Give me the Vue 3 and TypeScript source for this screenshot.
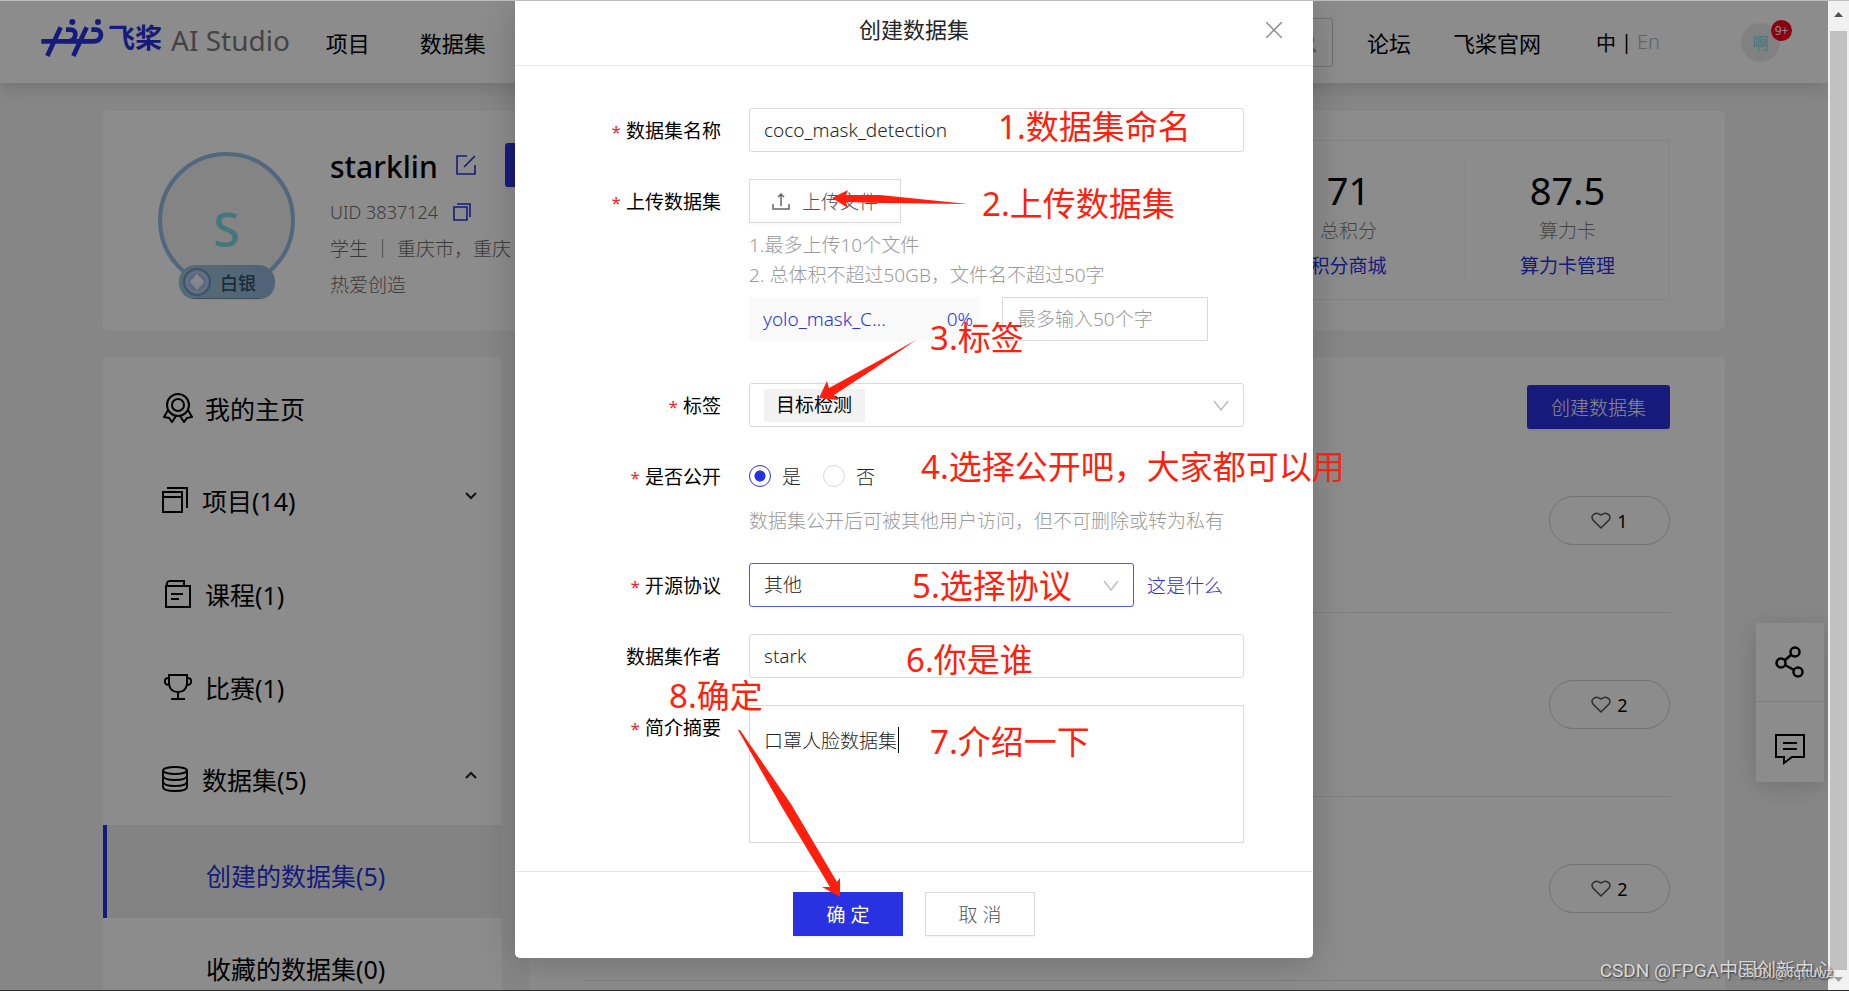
<script setup lang="ts">
import { ref } from 'vue'

interface MenuItem {
  label: string
  icon: string
  chevron?: 'up' | 'down'
}
interface Note {
  text: string
  x: number
  y: number
}

const menu: MenuItem[] = [
  { label: '我的主页', icon: 'medal' },
  { label: '项目(14)', icon: 'stack', chevron: 'down' },
  { label: '课程(1)', icon: 'course' },
  { label: '比赛(1)', icon: 'trophy' },
  { label: '数据集(5)', icon: 'database', chevron: 'up' },
]

const likes: number[] = [1, 2, 2]

const notes: Note[] = [
  { text: '1.数据集命名', x: 483, y: 102 },
  { text: '2.上传数据集', x: 467, y: 179 },
  { text: '3.标签', x: 415, y: 313 },
  { text: '4.选择公开吧，大家都可以用', x: 406, y: 442 },
  { text: '5.选择协议', x: 397, y: 561 },
  { text: '6.你是谁', x: 391, y: 635 },
  { text: '7.介绍一下', x: 415, y: 717 },
  { text: '8.确定', x: 154, y: 671 },
]

const name = ref('coco_mask_detection')
const fileNote = ref('')
const tag = ref('目标检测')
const isPublic = ref('yes')
const license = ref('其他')
const author = ref('stark')
const summary = ref('口罩人脸数据集')
</script>

<template>
  <div class="window">
    <div class="viewport">
      <header class="topbar">
        <a class="brand" href="#">
          <svg class="mark" viewBox="120 54 192 117" fill="none" stroke="#2932e1" stroke-width="14">
            <path d="M182 82 L142 168 M260 82 L220 168" />
            <path d="M124 124 H204 Q222 124 226 106 Q228 89 210 89 H198" />
            <path d="M204 124 H280 Q300 124 303 106 Q304 89 286 89 H274" />
            <circle cx="217" cy="66" r="9" fill="#2932e1" stroke="none" />
            <circle cx="294" cy="66" r="9" fill="#2932e1" stroke="none" />
          </svg>
          <span class="brand-cn">飞桨</span>
          <span class="brand-en">AI Studio</span>
        </a>
        <nav class="nav">
          <a href="#">项目</a>
          <a href="#">数据集</a>
        </nav>
        <div class="search">
          <input type="text" aria-label="搜索" />
          <svg viewBox="0 0 22 22" fill="none" stroke="#999" stroke-width="2">
            <circle cx="9" cy="9" r="8" />
            <path d="M14 15 L20 21" />
          </svg>
        </div>
        <nav class="links">
          <a href="#">论坛</a>
          <a href="#">飞桨官网</a>
        </nav>
        <div class="lang"><a href="#">中</a><span>|</span><a href="#" class="off">En</a></div>
        <div class="user">
          <span>啊</span>
          <b class="count">9+</b>
        </div>
      </header>

      <main class="page">
        <section class="card profile">
          <div class="avatar">
            <span class="letter">S</span>
            <div class="rank">
              <svg viewBox="0 0 30 30">
                <circle cx="15" cy="15" r="13" fill="#a3c2ea" stroke="#7195bf" stroke-width="2" />
                <circle cx="15" cy="15" r="10" fill="none" stroke="#c8def8" />
                <path d="M15 7 L22 15 L15 23 L8 15 Z" fill="#e9f4ff" />
                <path d="M15 7 L22 15 H8 Z" fill="#f8fcff" />
              </svg>
              <span>白银</span>
            </div>
          </div>
          <div class="person">
            <div class="name-row">
              <h1>starklin</h1>
              <svg class="edit" viewBox="0 0 20 20" fill="none" stroke="#2932e1" stroke-width="1.6">
                <path d="M11 1 H1 V19 H19 V10 M8 12 L19 1" />
              </svg>
              <button class="primary follow" type="button">编辑资料</button>
            </div>
            <p class="uid">
              UID 3837124
              <svg class="copy" viewBox="0 0 18 18" fill="none" stroke="#2932e1" stroke-width="1.6">
                <path d="M1 4 H14 V17 H1 Z M4 1 H17 V14" />
              </svg>
            </p>
            <p>学生 ｜ 重庆市，重庆</p>
            <p>热爱创造</p>
          </div>
          <div class="stats">
            <div class="stat wide">
              <strong>71</strong>
              <span>总积分</span>
              <a href="#">积分商城</a>
            </div>
            <div class="stat">
              <strong>87.5</strong>
              <span>算力卡</span>
              <a href="#">算力卡管理</a>
            </div>
          </div>
        </section>

        <div class="columns">
          <aside class="card sidebar">
            <a v-for="item in menu" :key="item.label" href="#" class="entry" :class="{ group: item.chevron }">
              <svg v-if="item.icon === 'medal'" class="ico" viewBox="0 0 30 30">
                <circle cx="15" cy="12" r="11" />
                <circle cx="15" cy="12" r="6" />
                <path d="M5 17 L1 24 L6 25 L9 29 L13 23 M25 17 L29 24 L24 25 L21 29 L17 23" />
              </svg>
              <svg v-else-if="item.icon === 'stack'" class="ico" viewBox="0 0 26 26">
                <path d="M1 5 H20 V25 H1 Z M1 10 H20 M5 1 H25 V21" />
              </svg>
              <svg v-else-if="item.icon === 'course'" class="ico" viewBox="0 0 30 30">
                <path d="M3 6 V28 H27 V7 H4 Q3 2 7 2 H21 V7 M8 15 H20 M8 20 H16" />
              </svg>
              <svg v-else-if="item.icon === 'trophy'" class="ico" viewBox="0 0 30 30">
                <path d="M6 3 H24 V12 Q23 20 15 20 Q7 20 6 12 Z M6 6 Q1 6 2 10 Q2 13 7 13 M24 6 Q29 6 28 10 Q28 13 23 13 M15 20 V27 M8 27 H22" />
              </svg>
              <svg v-else class="ico" viewBox="0 0 26 26">
                <ellipse cx="13" cy="4.500" rx="12" ry="3.500" />
                <path d="M1 5 V21 Q1 25 13 25 Q25 25 25 21 V5 M1 10 Q2 14 13 14 Q24 14 25 10 M1 16 Q2 20 13 20 Q24 20 25 16" />
              </svg>
              <span>{{ item.label }}</span>
              <svg v-if="item.chevron" class="chev" viewBox="0 0 12 8">
                <path :d="item.chevron === 'down' ? 'M1 1 L6 6 L11 1' : 'M1 7 L6 2 L11 7'" />
              </svg>
            </a>
            <a href="#" class="sub active">创建的数据集(5)</a>
            <a href="#" class="sub">收藏的数据集(0)</a>
          </aside>

          <section class="card list">
            <div class="list-head">
              <button class="primary" type="button">创建数据集</button>
            </div>
            <div v-for="(n, i) in likes" :key="i" class="row">
              <button class="like" type="button">
                <svg viewBox="0 0 20 17" fill="none" stroke="#555" stroke-width="1.500">
                  <path d="M10 16 L2 8 Q0 5 2 3 Q5 0 8 2 L10 3 L12 2 Q15 0 18 3 Q20 5 18 8 Z" />
                </svg>
                <span>{{ n }}</span>
              </button>
            </div>
          </section>
        </div>
      </main>

      <div class="float">
        <button type="button" aria-label="分享">
          <svg viewBox="0 0 30 32" fill="none" stroke="#000" stroke-width="2.500">
            <circle cx="20" cy="6" r="4.500" />
            <circle cx="6" cy="17" r="4.500" />
            <circle cx="23" cy="26" r="4.500" />
            <path d="M10 14 L16 9 M10 19 L19 24" />
          </svg>
        </button>
        <button type="button" aria-label="反馈">
          <svg viewBox="0 0 30 32" fill="none" stroke="#000" stroke-width="2">
            <path d="M1 2 H29 V24 H17 L9 30 V24 H1 Z M8 10 H22 M8 16 H22" />
          </svg>
        </button>
      </div>

      <div class="mask">
        <form class="modal" @submit.prevent>
          <div class="modal-head">
            <h2>创建数据集</h2>
            <button class="close" type="button" aria-label="关闭">
              <svg viewBox="0 0 16 16" fill="none" stroke="#8c8c8c" stroke-width="1.500">
                <path d="M0 0 L16 16 M16 0 L0 16" />
              </svg>
            </button>
          </div>

          <div class="modal-body">
            <div class="field">
              <label class="label req" for="f-name">数据集名称</label>
              <input id="f-name" v-model="name" class="box" type="text" />
            </div>

            <div class="field">
              <label class="label req" for="f-upload">上传数据集</label>
              <div class="control">
                <button id="f-upload" class="upload" type="button">
                  <svg viewBox="0 0 18 18" fill="none" stroke="#666" stroke-width="1.500">
                    <path d="M1 12 V17 H17 V12 M9 14 V2 M6 5 L9 2 L12 5" />
                  </svg>
                  上传文件
                </button>
                <div class="hints">
                  <p>1.最多上传10个文件</p>
                  <p>2. 总体积不超过50GB，文件名不超过50字</p>
                </div>
                <div class="file-row">
                  <div class="file"><span>yolo_mask_C...</span><span>0%</span></div>
                  <input v-model="fileNote" class="box square" type="text" aria-label="文件说明" placeholder="最多输入50个字" />
                </div>
              </div>
            </div>

            <div class="field spaced">
              <label class="label req" for="f-tag">标签</label>
              <div class="box tags">
                <select id="f-tag" v-model="tag">
                  <option>目标检测</option>
                </select>
                <svg class="arrow" viewBox="0 0 16 11"><path d="M1 1 L8 10 L15 1" /></svg>
              </div>
            </div>

            <div class="field">
              <span id="public-label" class="label req">是否公开</span>
              <div class="control">
                <div class="radios" role="radiogroup" aria-labelledby="public-label">
                  <label><input v-model="isPublic" type="radio" name="public" value="yes" />是</label>
                  <label><input v-model="isPublic" type="radio" name="public" value="no" />否</label>
                </div>
                <p class="tip">数据集公开后可被其他用户访问，但不可删除或转为私有</p>
              </div>
            </div>

            <div class="field">
              <label class="label req" for="f-license">开源协议</label>
              <div class="license">
                <div class="pick">
                  <select id="f-license" v-model="license" class="box">
                    <option>其他</option>
                  </select>
                  <svg class="arrow" viewBox="0 0 16 11"><path d="M1 1 L8 10 L15 1" /></svg>
                </div>
                <a href="#">这是什么</a>
              </div>
            </div>

            <div class="field">
              <label class="label" for="f-author">数据集作者</label>
              <input id="f-author" v-model="author" class="box" type="text" />
            </div>

            <div class="field">
              <label class="label req" for="f-summary">简介摘要</label>
              <div class="area">
                <textarea id="f-summary" v-model="summary" class="box square"></textarea>
                <i class="caret"></i>
              </div>
            </div>
          </div>

          <div class="modal-foot">
            <button class="ok" type="submit">确 定</button>
            <button class="cancel" type="button">取 消</button>
          </div>

          <svg class="arrows" viewBox="0 0 798 957" fill="#ff1f0f">
            <path d="M317 197 L333 189 L331 194 L365 194 L453 203 L365 202 L331 201 L333 207 Z" />
            <path d="M304 397 L312 380 L314 387 Q360 362 401 339 Q360 368 319 394 L323 399 Z" />
            <path d="M325 896 L307 886 L315 886 L268 808 L223 729 L225 729 L276 803 L322 881 L325 877 Z" />
          </svg>
          <span v-for="n in notes" :key="n.text" class="note" :style="{ left: n.x + 'px', top: n.y + 'px' }">{{ n.text }}</span>
        </form>
      </div>
    </div>

    <div class="scrollbar">
      <svg viewBox="0 0 21 30"><path d="M6 16 L10.500 11 L15 16 Z" fill="#505050" /></svg>
      <div class="thumb"></div>
      <svg viewBox="0 0 21 20"><path d="M6 7 L10.500 12 L15 7 Z" fill="#a0a0a0" /></svg>
    </div>
    <div class="watermark">CSDN @FPGA中国创新中心</div>
    <div class="watermark small">CSDN @cqftuwz</div>
  </div>
</template>

<style>
body {
  margin: 0;
  overflow: hidden;
}
</style>

<style scoped>
* {
  box-sizing: border-box;
}
.window {
  position: relative;
  display: flex;
  height: 100vh;
  overflow: hidden;
  border-top: 1px solid #bdbdbd;
  border-bottom: 1px solid #2b2b2b;
  font-family: "Noto Sans", "Noto Sans CJK SC", sans-serif;
  font-size: 19px;
  font-weight: 300;
  color: #000;
}
.viewport {
  position: relative;
  flex: 1;
  overflow: hidden;
  background: #f5f5f5;
}
a {
  color: inherit;
  text-decoration: none;
}
p,
h1,
h2 {
  margin: 0;
  font-weight: inherit;
}
button,
input,
select,
textarea {
  margin: 0;
  font: inherit;
  color: inherit;
}
svg {
  display: block;
  flex: none;
}

.topbar {
  position: relative;
  display: flex;
  align-items: center;
  height: 82px;
  padding: 0 48px 0 40px;
  background: #fff;
  box-shadow: 0 6px 18px rgba(0, 0, 0, 0.14);
  font-size: 22px;
  font-weight: 400;
}
.brand {
  display: flex;
  align-items: center;
  height: 68px;
  align-self: flex-start;
}
.mark {
  width: 64px;
  height: 39px;
  margin-top: 4px;
}
.brand-cn {
  margin-left: 4px;
  padding-top: 3px;
  font-size: 27px;
  font-weight: 700;
  color: #2932e1;
}
.brand-en {
  margin-left: 9px;
  padding-top: 10px;
  font-size: 28px;
  font-weight: 400;
  color: #7d7d7d;
}
.nav {
  display: flex;
  gap: 50px;
  margin-left: 36px;
}
.search {
  display: flex;
  align-items: center;
  width: 320px;
  height: 49px;
  margin-left: auto;
  padding: 0 14px;
  border: 1px solid #ccc;
  border-radius: 3px;
}
.search input {
  flex: 1;
  min-width: 0;
  border: 0;
  background: none;
}
.search svg {
  width: 22px;
  height: 22px;
}
.links {
  display: flex;
  gap: 42px;
  margin-left: 34px;
}
.lang {
  display: flex;
  gap: 5px;
  margin-left: 55px;
  font-size: 20px;
}
.off {
  color: #b3b3b3;
  font-weight: 300;
}
.user {
  position: relative;
  display: grid;
  place-items: center;
  width: 39px;
  height: 39px;
  margin-left: 81px;
  border-radius: 50%;
  background: #ececec;
  color: #78dae0;
  font-size: 16px;
}
.count {
  position: absolute;
  top: -3px;
  right: -12px;
  width: 21px;
  height: 21px;
  border-radius: 50%;
  background: #ff001f;
  color: #fff;
  font-size: 12px;
  font-weight: 400;
  line-height: 21px;
  text-align: center;
}

.page {
  display: flex;
  flex-direction: column;
  gap: 27px;
  padding: 28px 103px 0;
}
.card {
  border-radius: 5px;
  background: #fff;
}
.profile {
  display: flex;
  height: 219px;
  padding: 29px 55px 0;
}
.avatar {
  position: relative;
  width: 137px;
  height: 137px;
  margin-top: 12px;
  border: 4px solid #93bce6;
  border-radius: 50%;
  background: #f0f0f0;
  display: grid;
  place-items: center;
}
.letter {
  padding-top: 16px;
  color: #78dae0;
  font-size: 48px;
  font-weight: 500;
  line-height: 1;
}
.rank {
  position: absolute;
  left: 17px;
  bottom: -13px;
  display: flex;
  align-items: center;
  gap: 8px;
  width: 96px;
  height: 33px;
  padding-left: 3px;
  border-radius: 17px;
  background: linear-gradient(90deg, #9cc8d6, #90b4dc);
  box-shadow: 0 1px 1px #5f8299;
  color: #34516f;
  font-size: 18px;
  font-weight: 500;
}
.rank svg {
  width: 30px;
  height: 30px;
}
.person {
  margin-left: 35px;
  color: #6e6e6e;
  white-space: nowrap;
}
.name-row {
  display: flex;
  align-items: center;
  height: 49px;
  padding-top: 1px;
  color: #000;
}
.name-row h1 {
  width: 126px;
  padding-top: 3px;
  font-size: 30px;
  font-weight: 500;
}
.edit {
  width: 20px;
  height: 20px;
}
.follow {
  margin-left: 29px;
}
.person p {
  display: flex;
  align-items: center;
  gap: 15px;
  height: 36px;
}
.person .uid {
  height: 36px;
  margin-top: 5px;
  font-size: 18px;
}
.copy {
  width: 18px;
  height: 18px;
}
.primary {
  height: 44px;
  padding: 0 24px;
  border: 0;
  border-radius: 3px;
  background: #2932e1;
  box-shadow: 0 2px 0 rgba(0, 0, 0, 0.05);
  color: #fff;
}
.stats {
  display: flex;
  align-items: center;
  height: 160px;
  margin-left: auto;
  border: 1px dotted #e0e0e0;
}
.stat {
  display: flex;
  flex-direction: column;
  align-items: center;
  justify-content: center;
  width: 204px;
  height: 119px;
  padding-top: 10px;
  border-left: 1px dotted #e0e0e0;
  line-height: 35px;
}
.wide {
  width: 234px;
}
.stat strong {
  font-size: 38px;
  font-weight: 400;
  line-height: 48px;
}
.stat span {
  color: #7d7d7d;
}
.stat a {
  color: #2932e1;
  font-weight: 400;
}

.columns {
  display: flex;
  gap: 27px;
}
.sidebar {
  display: flex;
  flex-direction: column;
  width: 399px;
  padding-top: 3px;
  font-size: 25px;
  font-weight: 400;
}
.entry {
  display: flex;
  align-items: center;
  gap: 12px;
  height: 93px;
  padding: 2px 25px 0 60px;
}
.ico {
  width: 30px;
  height: 30px;
  fill: none;
  stroke: #000;
  stroke-width: 2;
}
.group {
  gap: 14px;
  padding: 0 25px 0 59px;
}
.group .ico {
  width: 26px;
  height: 26px;
}
.chev {
  width: 12px;
  height: 8px;
  margin: 0 0 8px auto;
  fill: none;
  stroke: #222;
  stroke-width: 2;
}
.sub {
  display: flex;
  align-items: center;
  height: 93px;
  padding: 7px 0 0 103px;
}
.active {
  padding-left: 99px;
  border-left: 4px solid #2932e1;
  background: #efefef;
  color: #2932e1;
}
.list {
  flex: 1;
  padding: 28px 55px 0;
}
.list-head {
  display: flex;
  justify-content: flex-end;
}
.row {
  display: flex;
  align-items: center;
  justify-content: flex-end;
  height: 184px;
  border-bottom: 1px solid #e8e8e8;
}
.like {
  display: flex;
  align-items: center;
  justify-content: center;
  gap: 6px;
  width: 121px;
  height: 49px;
  border: 1px solid #d0d0d0;
  border-radius: 25px;
  background: none;
  font-size: 18px;
  font-weight: 400;
}
.like svg {
  width: 20px;
  height: 17px;
}

.float {
  position: absolute;
  right: 4px;
  top: 622px;
  width: 68px;
  background: #fff;
  box-shadow: 0 4px 24px rgba(0, 0, 0, 0.16);
}
.float button {
  display: grid;
  place-items: center;
  width: 100%;
  height: 78px;
  padding: 0;
  border: 0;
  background: none;
}
.float button + button {
  height: 81px;
  padding-top: 14px;
  border-top: 1px solid #e3e3e3;
}
.float svg {
  width: 30px;
  height: 32px;
}

.mask {
  position: absolute;
  inset: 0;
  background: rgba(0, 0, 0, 0.45);
}
.modal {
  position: relative;
  width: 798px;
  margin: 0 auto;
  border-radius: 0 0 5px 5px;
  background: #fff;
  box-shadow: 0 5px 36px rgba(0, 0, 0, 0.2);
  color: #262626;
}
.modal-head {
  display: flex;
  align-items: center;
  justify-content: center;
  height: 65px;
  padding-bottom: 11px;
  border-bottom: 1px solid #e8e8e8;
}
.modal-head h2 {
  font-size: 22px;
  font-weight: 400;
}
.close {
  position: absolute;
  right: 24px;
  top: 14px;
  padding: 7px;
  border: 0;
  background: none;
}
.close svg {
  width: 16px;
  height: 16px;
}
.modal-body {
  display: flex;
  flex-direction: column;
  gap: 27px;
  padding: 42px 69px 28px 0;
}
.field {
  display: grid;
  grid-template-columns: 206px 1fr;
  gap: 28px;
}
.spaced {
  margin-top: 15px;
}
.label {
  height: 44px;
  line-height: 46px;
  text-align: right;
  color: #000;
  font-weight: 400;
}
.req::before {
  content: "*";
  margin-right: 5px;
  color: #f5222d;
  font-size: 17px;
}
.box {
  width: 100%;
  height: 44px;
  padding: 0 14px;
  border: 1px solid #d9d9d9;
  border-radius: 3px;
  background: #fff;
  outline: 0;
  appearance: none;
}
.square {
  border-radius: 0;
}
.box::placeholder {
  color: #999;
  opacity: 1;
}
.upload {
  display: flex;
  align-items: center;
  gap: 12px;
  height: 44px;
  padding: 0 22px;
  border: 1px solid #d9d9d9;
  background: #fff;
  box-shadow: 0 2px 0 rgba(0, 0, 0, 0.02);
  color: #555;
}
.upload svg {
  width: 18px;
  height: 18px;
}
.hints {
  margin: 7px 0;
  color: #999;
  line-height: 30px;
}
.file-row {
  display: flex;
  gap: 22px;
}
.file {
  display: flex;
  align-items: center;
  justify-content: space-between;
  width: 231px;
  height: 44px;
  padding: 0 7px 0 14px;
  background: #fafafa;
  color: #2932e1;
}
.file-row .box {
  width: 206px;
}
.tags {
  display: flex;
  align-items: center;
  justify-content: space-between;
}
.tags select {
  height: 33px;
  padding: 0 12px;
  border: 0;
  background: #f2f2f2;
  color: #000;
  font-weight: 400;
  appearance: none;
}
.arrow {
  width: 16px;
  height: 11px;
  fill: none;
  stroke: #bfbfbf;
  stroke-width: 1.5;
}
.radios {
  display: flex;
  gap: 22px;
  height: 44px;
}
.radios label {
  display: flex;
  align-items: center;
  gap: 11px;
}
.radios input {
  width: 22px;
  height: 22px;
  border: 1px solid #d9d9d9;
  border-radius: 50%;
  background: #fff;
  appearance: none;
}
.radios input:checked {
  border-color: #2932e1;
  background: radial-gradient(circle, #2932e1 5px, #fff 6px);
}
.tip {
  margin-top: 8px;
  color: #999;
  line-height: 30px;
  white-space: nowrap;
}
.license {
  display: flex;
  align-items: center;
  gap: 13px;
}
.license a {
  color: #2932e1;
}
.pick {
  position: relative;
  width: 385px;
}
.pick .box {
  border-color: #4f57e6;
}
.pick .arrow {
  position: absolute;
  right: 15px;
  top: 17px;
}
.area {
  position: relative;
}
.area textarea {
  display: block;
  height: 138px;
  padding: 20px 14px;
  line-height: 30px;
  resize: none;
}
.caret {
  position: absolute;
  left: 149px;
  top: 22px;
  width: 1px;
  height: 26px;
  background: #000;
}
.modal-foot {
  display: flex;
  justify-content: center;
  gap: 22px;
  padding: 20px 0 22px;
  border-top: 1px solid #e8e8e8;
}
.modal-foot button {
  width: 110px;
  height: 44px;
  border: 1px solid #d9d9d9;
  background: #fff;
  box-shadow: 0 2px 0 rgba(0, 0, 0, 0.03);
  color: #555;
}
.modal-foot .ok {
  border-color: #2932e1;
  background: #2932e1;
  color: #fff;
  font-weight: 400;
}
.arrows {
  position: absolute;
  left: 0;
  top: 0;
  width: 798px;
  height: 957px;
  pointer-events: none;
}
.note {
  position: absolute;
  color: #ff1f0f;
  font-size: 33px;
  font-weight: 400;
  line-height: 48px;
  white-space: nowrap;
}

.scrollbar {
  display: flex;
  flex-direction: column;
  width: 21px;
  background: #f1f1f1;
}
.scrollbar svg {
  width: 21px;
}
.thumb {
  flex: 1;
  margin: 0 2px;
  background: #c1c1c1;
}
.watermark {
  position: absolute;
  right: 16px;
  bottom: 2px;
  color: #d8d8d8;
  font-family: Roboto, "Noto Sans CJK SC", sans-serif;
  font-size: 19px;
  font-weight: 400;
  line-height: 34px;
  text-shadow: 1px 1px 2px #333;
  white-space: nowrap;
}
.small {
  bottom: 0;
  font-size: 13px;
}
</style>
